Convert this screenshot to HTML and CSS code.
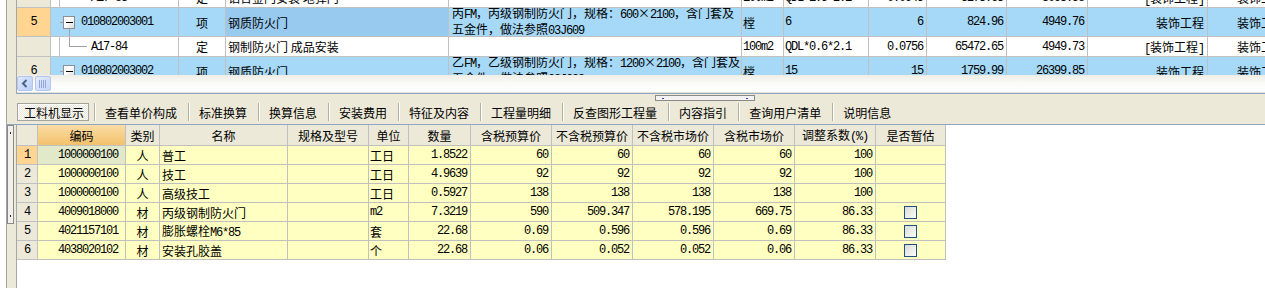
FILE: index.html
```html
<!DOCTYPE html>
<html>
<head>
    <title>工料机显示</title>
    <link rel="stylesheet" href="styles.css">
</head>
<body>
<div class="window">
    <div class="top-pane">
        <div class="side"></div>
        <div class="top-main">
            <div class="grid-view">
                <div class="tgrid">
                    <div class="trow">
                        <div class="hd"></div>
                        <div class="c tc"></div>
                        <div class="c code ind n">A17-83</div>
                        <div class="c m">定</div>
                        <div class="c">铝合金门安装 地弹门</div>
                        <div class="c desc"></div>
                        <div class="c u n">100m2</div>
                        <div class="c u n">QDL*1.5*2.1</div>
                        <div class="c r n">0.0945</div>
                        <div class="c r n">3273.63</div>
                        <div class="c r n">3093.58</div>
                        <div class="c r"><span><span class="n">[</span>装饰工程<span class="n">]</span></span></div>
                        <div class="c last">装饰工程</div>
                    </div>
                    <div class="trow tall blue">
                        <div class="hd cur n">5</div>
                        <div class="c tc"></div>
                        <div class="c code"><span class="stub"></span><span class="tbox"></span><span class="n">010802003001</span></div>
                        <div class="c m">项</div>
                        <div class="c sel">钢质防火门</div>
                        <div class="c desc"><span>丙<span class="n">FM</span>，丙级钢制防火门，规格：<span class="n">600</span>×<span class="n">2100</span>，含门套及<br>五金件，做法参照<span class="n">03J609</span></span></div>
                        <div class="c u">樘</div>
                        <div class="c u n">6</div>
                        <div class="c r n">6</div>
                        <div class="c r n">824.96</div>
                        <div class="c r n">4949.76</div>
                        <div class="c r">装饰工程</div>
                        <div class="c last">装饰工程</div>
                    </div>
                    <div class="trow">
                        <div class="hd"></div>
                        <div class="c tc"></div>
                        <div class="c code"><span class="branch"></span><span class="n">A17-84</span></div>
                        <div class="c m">定</div>
                        <div class="c">钢制防火门 成品安装</div>
                        <div class="c desc"></div>
                        <div class="c u n">100m2</div>
                        <div class="c u n">QDL*0.6*2.1</div>
                        <div class="c r n">0.0756</div>
                        <div class="c r n">65472.65</div>
                        <div class="c r n">4949.73</div>
                        <div class="c r"><span><span class="n">[</span>装饰工程<span class="n">]</span></span></div>
                        <div class="c last">装饰工程</div>
                    </div>
                    <div class="trow tall blue">
                        <div class="hd n">6</div>
                        <div class="c tc"></div>
                        <div class="c code"><span class="stub"></span><span class="tbox"></span><span class="n">010802003002</span></div>
                        <div class="c m">项</div>
                        <div class="c">钢质防火门</div>
                        <div class="c desc"><span>乙<span class="n">FM</span>，乙级钢制防火门，规格：<span class="n">1200</span>×<span class="n">2100</span>，含门套及<br>五金件，做法参照<span class="n">03J609</span></span></div>
                        <div class="c u">樘</div>
                        <div class="c u n">15</div>
                        <div class="c r n">15</div>
                        <div class="c r n">1759.99</div>
                        <div class="c r n">26399.85</div>
                        <div class="c r">装饰工程</div>
                        <div class="c last">装饰工程</div>
                    </div>
                </div>
            </div>
            <div class="hscroll">
                <div class="sb-btn">
                    <svg width="8" height="9" viewBox="0 0 8 9"><path d="M5.5 1 L2 4.5 L5.5 8" fill="none" stroke="#4d6185" stroke-width="2"/></svg>
                </div>
                <div class="sb-thumb">
                    <svg width="8" height="8" viewBox="0 0 8 8"><path d="M0.5 0V8M2.5 0V8M4.5 0V8M6.5 0V8" stroke="#8fa6d8" stroke-width="1"/></svg>
                </div>
            </div>
        </div>
    </div>

    <div class="tab-area">
        <div class="grip"><span class="dot"></span><span class="dot"></span></div>
        <div class="tabs">
            <div class="tab active">工料机显示</div>
            <div class="tab">查看单价构成</div>
            <div class="tab">标准换算</div>
            <div class="tab">换算信息</div>
            <div class="tab">安装费用</div>
            <div class="tab">特征及内容</div>
            <div class="tab">工程量明细</div>
            <div class="tab">反查图形工程量</div>
            <div class="tab">内容指引</div>
            <div class="tab">查询用户清单</div>
            <div class="tab">说明信息</div>
        </div>
    </div>

    <div class="bottom-pane">
        <div class="side"><div class="vgrip"><span class="dot"></span><span class="dot"></span></div></div>
        <div class="bottom-main">
            <div class="brow head">
                <div class="hd"></div>
                <div class="c key">编码</div>
                <div class="c">类别</div>
                <div class="c">名称</div>
                <div class="c">规格及型号</div>
                <div class="c">单位</div>
                <div class="c">数量</div>
                <div class="c">含税预算价</div>
                <div class="c">不含税预算价</div>
                <div class="c">不含税市场价</div>
                <div class="c">含税市场价</div>
                <div class="c"><span>调整系数<span class="n">(%)</span></span></div>
                <div class="c">是否暂估</div>
            </div>
            <div class="brow">
                <div class="hd cur n">1</div>
                <div class="c bcode pick n">1000000100</div>
                <div class="c m">人</div>
                <div class="c">普工</div>
                <div class="c"></div>
                <div class="c u">工日</div>
                <div class="c r n">1.8522</div>
                <div class="c r n">60</div>
                <div class="c r n">60</div>
                <div class="c r n">60</div>
                <div class="c r n">60</div>
                <div class="c r n">100</div>
                <div class="c m"></div>
            </div>
            <div class="brow">
                <div class="hd n">2</div>
                <div class="c bcode n">1000000100</div>
                <div class="c m">人</div>
                <div class="c">技工</div>
                <div class="c"></div>
                <div class="c u">工日</div>
                <div class="c r n">4.9639</div>
                <div class="c r n">92</div>
                <div class="c r n">92</div>
                <div class="c r n">92</div>
                <div class="c r n">92</div>
                <div class="c r n">100</div>
                <div class="c m"></div>
            </div>
            <div class="brow">
                <div class="hd n">3</div>
                <div class="c bcode n">1000000100</div>
                <div class="c m">人</div>
                <div class="c">高级技工</div>
                <div class="c"></div>
                <div class="c u">工日</div>
                <div class="c r n">0.5927</div>
                <div class="c r n">138</div>
                <div class="c r n">138</div>
                <div class="c r n">138</div>
                <div class="c r n">138</div>
                <div class="c r n">100</div>
                <div class="c m"></div>
            </div>
            <div class="brow">
                <div class="hd n">4</div>
                <div class="c bcode n">4009018000</div>
                <div class="c m">材</div>
                <div class="c">丙级钢制防火门</div>
                <div class="c"></div>
                <div class="c u n">m2</div>
                <div class="c r n">7.3219</div>
                <div class="c r n">590</div>
                <div class="c r n">509.347</div>
                <div class="c r n">578.195</div>
                <div class="c r n">669.75</div>
                <div class="c r n">86.33</div>
                <div class="c m"><span class="chk"></span></div>
            </div>
            <div class="brow">
                <div class="hd n">5</div>
                <div class="c bcode n">4021157101</div>
                <div class="c m">材</div>
                <div class="c"><span>膨胀螺栓<span class="n">M6*85</span></span></div>
                <div class="c"></div>
                <div class="c u">套</div>
                <div class="c r n">22.68</div>
                <div class="c r n">0.69</div>
                <div class="c r n">0.596</div>
                <div class="c r n">0.596</div>
                <div class="c r n">0.69</div>
                <div class="c r n">86.33</div>
                <div class="c m"><span class="chk"></span></div>
            </div>
            <div class="brow">
                <div class="hd n">6</div>
                <div class="c bcode n">4038020102</div>
                <div class="c m">材</div>
                <div class="c">安装孔胶盖</div>
                <div class="c"></div>
                <div class="c u">个</div>
                <div class="c r n">22.68</div>
                <div class="c r n">0.06</div>
                <div class="c r n">0.052</div>
                <div class="c r n">0.052</div>
                <div class="c r n">0.06</div>
                <div class="c r n">86.33</div>
                <div class="c m"><span class="chk"></span></div>
            </div>
        </div>
    </div>
</div>
</body>
</html>
```

FILE: styles.css
```css
* {
    box-sizing: border-box;
}
body {
    margin: 0;
    background: #fff;
    font-family: "Noto Sans CJK SC", sans-serif;
    font-size: 12px;
    color: #000;
    overflow: hidden;
}
.n {
    font-family: "Liberation Mono", monospace;
    font-size: 12px;
    letter-spacing: -1.2px;
}
.window {
    margin-left: 6px;
    height: 288px;
    border-left: 1px solid #a3a3a3;
    background: #ece9d8;
    display: flex;
    flex-direction: column;
}
.side {
    width: 9px;
    flex: none;
}

/* upper grid */
.top-pane {
    display: flex;
    height: 94px;
    flex: none;
}
.top-main {
    flex: 1;
    min-width: 0;
    background: #fff;
    border-left: 1px solid #a7a7a7;
    border-bottom: 1px solid #8ea6c1;
    display: flex;
    flex-direction: column;
}
.grid-view {
    height: 75px;
    flex: none;
    overflow: hidden;
}
.tgrid {
    margin-top: -12px;
}
.trow {
    display: grid;
    grid-template-columns: 34px 9px 119px 47px 223px 293px 42px 85px 58px 80px 81px 120px 108px;
    height: 20px;
}
.trow.tall {
    height: 29px;
}
.c, .hd {
    border-right: 1px solid #c0c0c0;
    border-bottom: 1px solid #c0c0c0;
    display: flex;
    align-items: center;
    padding: 0 3px 0 2px;
    white-space: nowrap;
    overflow: hidden;
}
.hd {
    background: #ece9d8;
    justify-content: center;
    padding: 0;
}
.hd.cur {
    background: #ffd591;
}
.m {
    justify-content: center;
    padding: 0;
}
.r {
    justify-content: flex-end;
}
.u {
    padding-left: 1px;
}
.tc {
    padding: 0;
}
.blue .c {
    background: #a6d8f7;
}
.blue .tc {
    border-right-color: transparent;
}
.blue .sel {
    background: #98c9ef;
}
.desc {
    padding-left: 3px;
}
.desc > span {
    line-height: 13px;
}
.last {
    padding-left: 29px;
}
.code {
    padding: 0;
}
.ind {
    padding-left: 31px;
}
.stub {
    flex: none;
    width: 3px;
    border-top: 1px solid #a0a0a0;
}
.tbox {
    position: relative;
    flex: none;
    width: 12px;
    height: 13px;
    margin-right: 6px;
    border: 1px solid #8f8f8f;
    background: linear-gradient(135deg, #fff 40%, #dadada);
}
.tbox::before {
    content: "";
    position: absolute;
    left: 2px;
    width: 7px;
    top: 5px;
    height: 1px;
    background: #000;
}
.tbox::after {
    content: "";
    position: absolute;
    left: 5px;
    top: calc(100% + 1px);
    height: 9px;
    border-left: 1px solid #a0a0a0;
}
.branch {
    flex: none;
    align-self: flex-start;
    width: 18px;
    height: 10px;
    margin: 0 4px 0 9px;
    border-left: 1px solid #a0a0a0;
    border-bottom: 1px solid #a0a0a0;
}

/* scroll bar */
.hscroll {
    height: 18px;
    flex: none;
    padding-top: 1px;
    border-bottom: 1px solid #e2e1d9;
    background: linear-gradient(#eeede5, #fbfbf9 50%, #fff);
    display: flex;
    gap: 2px;
}
.sb-btn, .sb-thumb {
    width: 16px;
    height: 15px;
    border: 1px solid #b4c6ee;
    border-radius: 2px;
    background: linear-gradient(135deg, #dde7fd, #bacff8);
    display: flex;
    align-items: center;
    justify-content: center;
}
.sb-thumb {
    background: linear-gradient(135deg, #e3ebfd, #c4d5f9);
}

/* tabs */
.tab-area {
    height: 31px;
    flex: none;
    padding-top: 1px;
    border-bottom: 1px solid #8ea6c1;
}
.grip {
    width: 100px;
    height: 6px;
    margin-left: 648px;
    padding: 0 6px;
    border: 1px solid #8a8a8a;
    background: #f3f3f1;
    display: flex;
    align-items: center;
    justify-content: space-between;
}
.grip .dot {
    width: 2px;
    height: 1px;
    background: #2a3fd0;
}
.tabs {
    display: flex;
    height: 18px;
    margin: 2px 0 0 10px;
}
.tab {
    display: flex;
    align-items: center;
    padding: 0 11px 0 10px;
    border-left: 1px solid #b3b0a0;
    box-shadow: inset 1px 0 #fff;
    white-space: nowrap;
}
.tab.active {
    width: 72px;
    padding: 0 0 0 6px;
    margin-right: 5px;
    border: 1px solid #a4a4a0;
    box-shadow: inset 1px 1px #fff;
    background: repeating-conic-gradient(#fefefc 0 25%, #e9e6d8 0 50%) 0 0 / 2px 2px;
}

/* lower grid */
.bottom-pane {
    flex: 1;
    min-height: 0;
    display: flex;
}
.vgrip {
    width: 7px;
    height: 99px;
    padding: 6px 0;
    border: 1px solid #8a8a8a;
    background: #f1f0ea;
    display: flex;
    flex-direction: column;
    justify-content: space-between;
    align-items: center;
}
.vgrip .dot {
    width: 1px;
    height: 2px;
    background: #223;
}
.bottom-main {
    flex: 1;
    min-width: 0;
    background: #fff;
    border-left: 1px solid #a7a7a7;
}
.brow {
    display: grid;
    grid-template-columns: 21px 88px 34px 128px 81px 40px 62px 81px 81px 81px 81px 81px 70px;
    height: 19px;
}
.brow.head {
    height: 21px;
}
.brow .c {
    background: #ffffc2;
}
.brow.head .c {
    background: #ece9d8;
    justify-content: center;
    padding: 0;
}
.brow.head .key {
    background: linear-gradient(#fbdca5, #f2c26b);
}
.bcode {
    justify-content: flex-end;
    padding-right: 7px;
}
.brow .pick {
    background: #e1e9c9;
}
.chk {
    width: 13px;
    height: 13px;
    border: 1px solid #1c5180;
    background: linear-gradient(135deg, #dcdcd6, #fbfbf9);
}
```
